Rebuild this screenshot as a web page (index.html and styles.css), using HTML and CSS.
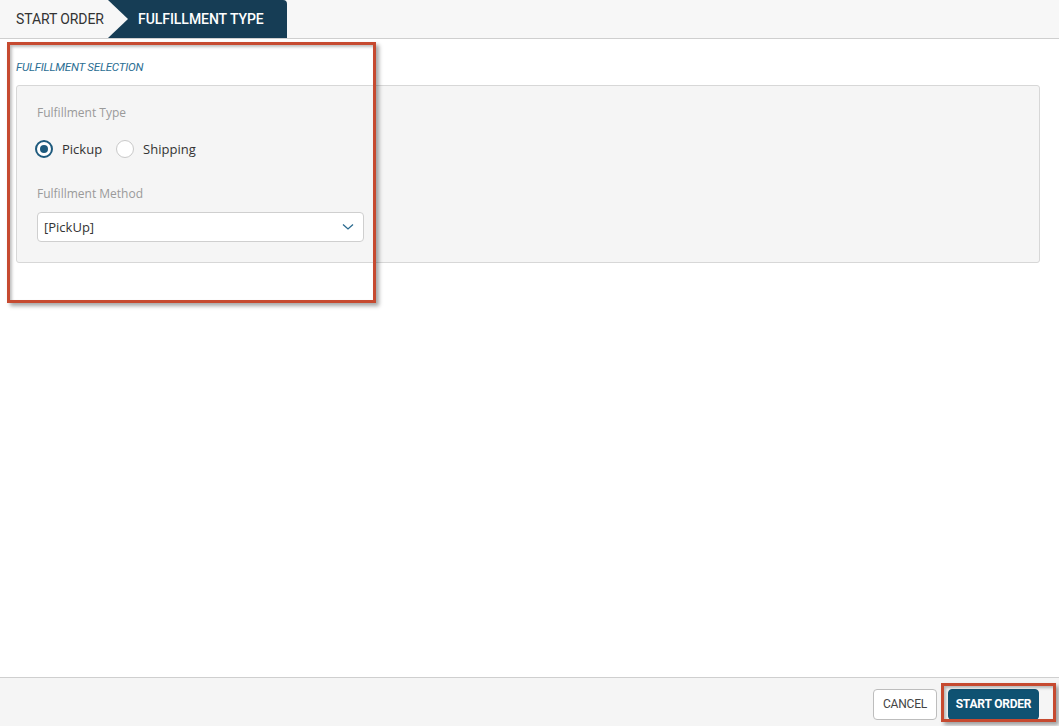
FILE: index.html
```html
<!DOCTYPE html>
<html>
<head>
<meta charset="utf-8">
<link rel="stylesheet" href="styles.css">
</head>
<body>
<div class="page">
  <header class="steps">
    <div class="step">START ORDER</div>
    <div class="step step-active">
      <svg class="notch" width="21" height="38" viewBox="0 0 21 38"><polygon points="0,0 20,19 0,38" fill="#f7f7f7"/></svg>
      <span>FULFILLMENT TYPE</span>
    </div>
  </header>
  <main class="content">
    <h2 class="section-title">FULFILLMENT SELECTION</h2>
    <div class="panel">
      <div class="field-label">Fulfillment Type</div>
      <div class="radios">
        <label class="radio"><span class="dot dot-on"></span>Pickup</label>
        <label class="radio"><span class="dot"></span>Shipping</label>
      </div>
      <div class="field-label method-label">Fulfillment Method</div>
      <div class="select">
        <span>[PickUp]</span>
        <svg width="12" height="8" viewBox="0 0 12 8"><polyline points="1,1.5 6,6 11,1.5" fill="none" stroke="#2a6a8f" stroke-width="1.3"/></svg>
      </div>
    </div>
    <div class="mark mark-form"></div>
  </main>
  <footer class="footer">
    <button class="btn btn-cancel">CANCEL</button>
    <button class="btn btn-primary">START ORDER</button>
    <div class="mark mark-btn"></div>
  </footer>
</div>
</body>
</html>
```
FILE: styles.css
```css
* { box-sizing: border-box; }
html, body { margin: 0; height: 100%; background: #fff; }
body { font-family: "Open Sans", "Liberation Sans", sans-serif; color: #333; }
.page { display: flex; flex-direction: column; height: 726px; }
.steps {
  height: 39px; background: #f7f7f7; border-bottom: 1px solid #cfcfcf;
  display: flex; align-items: stretch;
}
.step {
  font-family: Roboto, "Liberation Sans", sans-serif; font-size: 14px;
  letter-spacing: -0.1px; white-space: nowrap;
  color: #333; display: flex; align-items: center; padding: 0 0 0 16px;
  height: 38px; width: 108px;
}
.step-active {
  position: relative; background: #163d55; color: #fff; font-weight: 500;
  width: 179px; padding-left: 30px; border-top-right-radius: 4px;
  letter-spacing: -0.05px;
}
.notch { position: absolute; left: 0; top: 0; }
.content { flex: 1; position: relative; padding: 21px 19px 0 16px; }
.section-title {
  margin: 0 0 11px; font-family: Roboto, "Liberation Sans", sans-serif;
  font-style: italic; font-weight: 400; font-size: 11.5px; color: #2b6e93;
  height: 14px; line-height: 14px; letter-spacing: -0.2px;
}
.panel {
  background: #f5f5f5; border: 1px solid #d7d7d7; border-radius: 3px;
  height: 178px; padding: 18px 20px 0 18px;
}
.field-label { font-size: 12px; color: #9a9a9a; line-height: 18px; padding-left: 2px; }
.radios { display: flex; gap: 14px; margin-top: 18px; }
.radio { display: flex; align-items: center; gap: 9px; font-size: 13px; color: #333; line-height: 18px; }
.dot {
  width: 18px; height: 18px; border-radius: 50%; background: #fff;
  border: 1px solid #c9c9c9; display: inline-block; position: relative;
}
.dot-on { border: 2px solid #1e5a7d; }
.dot-on::after {
  content: ""; position: absolute; left: 3px; top: 3px; width: 8px; height: 8px;
  border-radius: 50%; background: #1e5a7d;
}
.method-label { margin-top: 27px; }
.select {
  margin-top: 9px; margin-left: 2px; width: 327px; height: 30px; background: #fff;
  border: 1px solid #cfcfcf; border-radius: 4px; display: flex;
  align-items: center; justify-content: space-between; padding: 0 9px 0 6px;
  font-size: 13px; color: #333;
}
.mark {
  position: absolute; border: 3px solid #c64a30;
  box-shadow: 3px 3px 4px rgba(0,0,0,.35), inset 2px 2px 3px rgba(0,0,0,.25);
  pointer-events: none;
}
.mark-form { left: 7px; top: 3px; width: 369px; height: 261px; }
.footer {
  position: relative; height: 49px; background: #f5f5f5; border-top: 1px solid #cfcfcf;
  display: flex; justify-content: flex-end; align-items: center;
  gap: 11px; padding: 0 20px 0 0;
}
.btn {
  font-family: Roboto, "Liberation Sans", sans-serif; font-size: 12px;
  height: 31px; border-radius: 4px; margin-top: 4px; cursor: pointer;
  white-space: nowrap; padding: 0; letter-spacing: -0.2px;
}
.btn-cancel { width: 64px; background: #fff; border: 1px solid #bdbdbd; color: #444; }
.btn-primary { width: 91px; background: #0f5272; border: 1px solid #0f5272; color: #fff; font-weight: 700; }
.mark-btn { left: 941px; top: 5px; width: 115px; height: 39px; }
```
